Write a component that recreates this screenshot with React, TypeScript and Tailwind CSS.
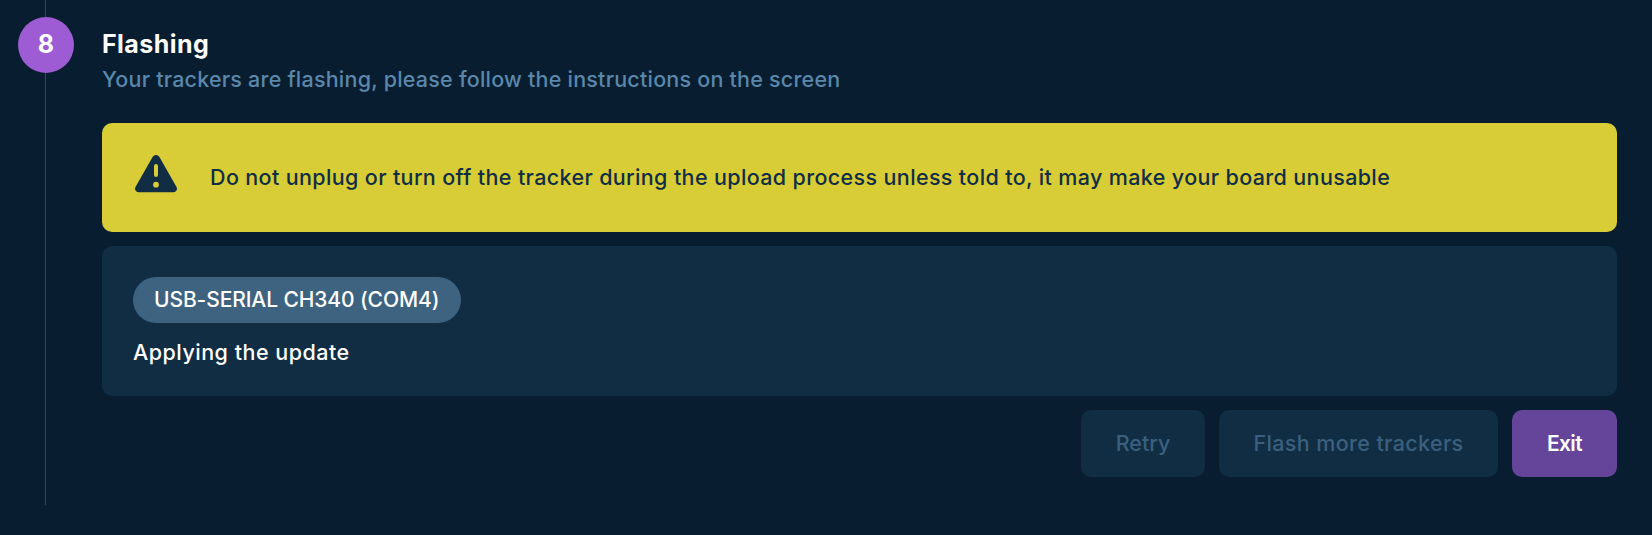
import React from "react";

function WarningIcon() {
  return (
    <svg viewBox="0 0 42 38" className="h-[38px] w-[42px] shrink-0 fill-[#112d43]">
      <path
        fillRule="evenodd"
        d="M17.6 1.9a4 4 0 0 1 6.8 0l17 29.9a3.6 3.6 0 0 1-3.2 5.5H3.8a3.6 3.6 0 0 1-3.2-5.5ZM21 9a2 2 0 0 0-2 2v9a2 2 0 0 0 4 0v-9a2 2 0 0 0-2-2Zm0 17.8a2.9 2.9 0 1 0 0 5.8 2.9 2.9 0 0 0 0-5.8Z"
      />
    </svg>
  );
}

export default function App() {
  return (
    <div className="flex h-[535px] w-full flex-col overflow-hidden bg-[#081e30] font-['Inter','Open_Sans',sans-serif] text-[21.5px] leading-[30px] font-medium whitespace-nowrap text-white">
      <div className="flex grow">
        <div className="flex h-[505px] w-[102px] shrink-0 flex-col">
          <div className="ml-[45px] h-[17px] w-px bg-[#3a4757]" />
          <div className="ml-[18px] flex h-14 w-14 items-center justify-center rounded-full bg-[#9d5cd4] pb-0.5 text-[25px] font-bold">
            8
          </div>
          <div className="ml-[45px] w-px grow bg-[#3a4757]" />
        </div>
        <main className="flex w-[1515px] flex-col pt-7">
          <h1 className="h-9 text-[25px] leading-8 font-bold tracking-[0.45px]">Flashing</h1>
          <p className="h-[59px] tracking-[0.22px] text-[#5b87ab]">
            Your trackers are flashing, please follow the instructions on the screen
          </p>
          <section className="flex h-[109px] items-center rounded-[10px] bg-[#d8cd37] pl-[33px] text-[#112d43]">
            <div className="mb-2">
              <WarningIcon />
            </div>
            <p className="ml-[33px] pb-0.5 tracking-[0.36px]">
              Do not unplug or turn off the tracker during the upload process unless told to, it may make your board unusable
            </p>
          </section>
          <section className="mt-3.5 h-[150px] rounded-[10px] bg-[#112d43] px-[31px] pt-[31px]">
            <div className="flex h-[46px] w-[328px] items-center rounded-full bg-[#3e6381] pl-[21px]">
              <span className="text-[21px] tracking-[-0.1px]">USB-SERIAL CH340 (COM4)</span>
            </div>
            <p className="mt-3.5 tracking-[0.5px]">Applying the update</p>
          </section>
          <div className="mt-3.5 flex justify-end gap-3.5">
            <button disabled className="h-[67px] w-[124px] rounded-[10px] bg-[#112d43] pb-0.5 text-[#3b607e]">
              Retry
            </button>
            <button disabled className="h-[67px] w-[279px] rounded-[10px] bg-[#112d43] pb-0.5 tracking-[0.37px] text-[#3b607e]">
              Flash more trackers
            </button>
            <button className="h-[67px] w-[105px] rounded-[10px] bg-[#65459a] text-[21px] font-semibold tracking-[-0.7px]">
              Exit
            </button>
          </div>
        </main>
      </div>
    </div>
  );
}
